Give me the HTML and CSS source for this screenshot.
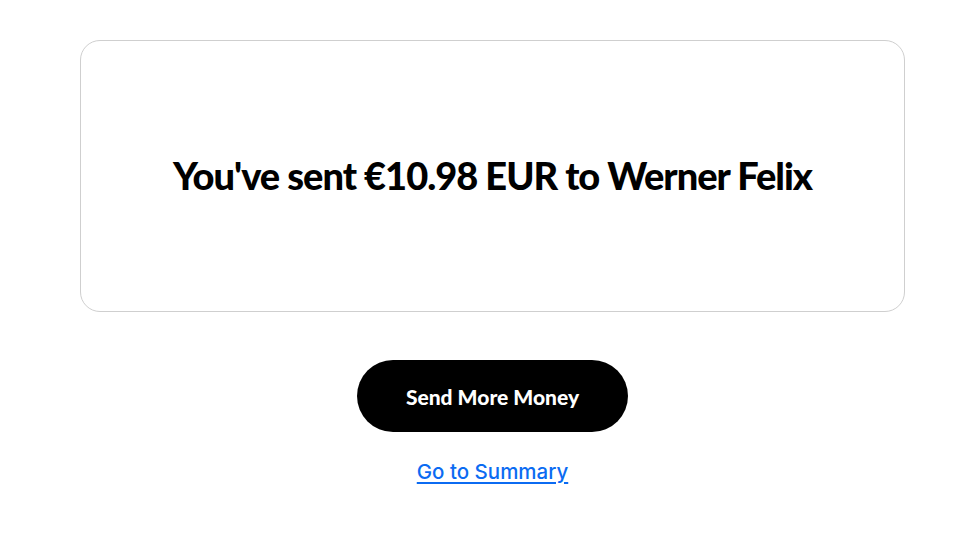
FILE: index.html
```html
<!DOCTYPE html>
<html lang="en">
<head>
<meta charset="utf-8">
<title>Transfer sent</title>
<link rel="stylesheet" href="styles.css">
</head>
<body>
<main class="page">
  <section class="card">
    <h1 class="title">You've sent €10.98 EUR to Werner Felix</h1>
  </section>
  <div class="actions">
    <button class="btn-primary" type="button">Send More Money</button>
    <a class="link" href="#">Go to Summary</a>
  </div>
</main>
</body>
</html>
```
FILE: styles.css
```css
html, body {
  margin: 0;
  padding: 0;
  background: #ffffff;
}
body {
  font-family: Lato, "Noto Sans", sans-serif;
  color: #000;
}
.page {
  width: 825px;
  padding: 40px 0 0 80px;
}
.card {
  box-sizing: border-box;
  height: 272px;
  border: 1px solid #cfcfcf;
  border-radius: 20px;
  display: flex;
  align-items: center;
  justify-content: center;
}
.title {
  margin: 0;
  font-size: 38px;
  font-weight: 900;
  letter-spacing: -1px;
  line-height: 1.2;
}
.actions {
  display: flex;
  flex-direction: column;
  align-items: center;
  padding-top: 48px;
}
.btn-primary {
  width: 271px;
  height: 72px;
  border: 0;
  border-radius: 36px;
  background: #000;
  color: #fff;
  font-family: Lato, "Noto Sans", sans-serif;
  font-size: 21px;
  font-weight: 900;
  letter-spacing: 0;
  cursor: pointer;
}
.link {
  margin-top: 28px;
  font-family: Inter, "Noto Sans", sans-serif;
  font-size: 20.5px;
  font-weight: 500;
  color: #0b6bf2;
  text-decoration: underline;
  text-decoration-thickness: 2px;
  text-underline-offset: 3px;
  line-height: 24px;
}
```
